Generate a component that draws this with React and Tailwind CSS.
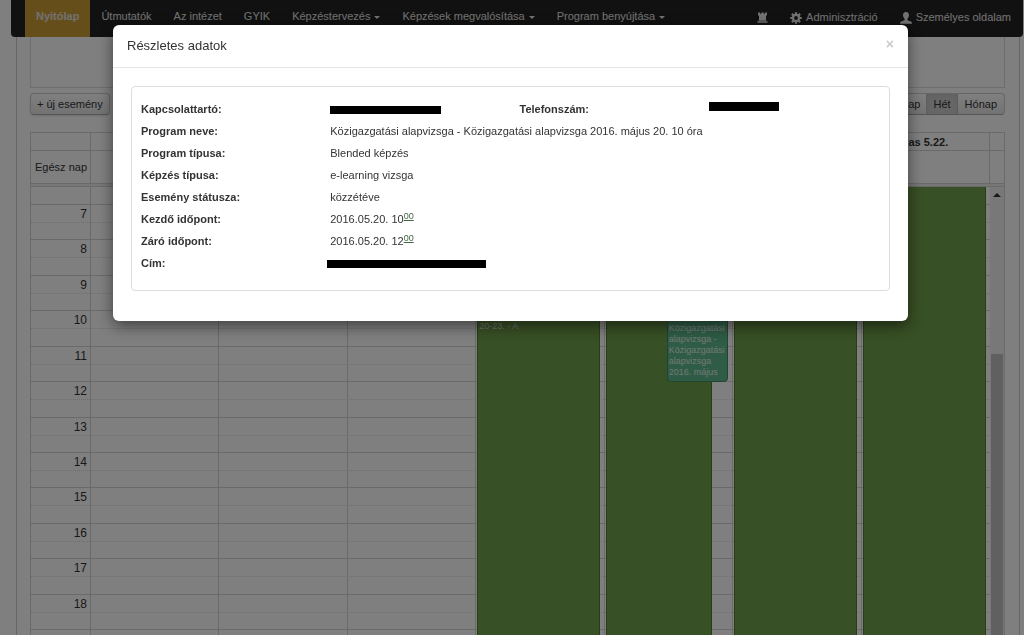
const navItems = [
  { label: "Nyitólap", active: true },
  { label: "Útmutatók" },
  { label: "Az intézet" },
  { label: "GYIK" },
  { label: "Képzéstervezés", menu: true },
  { label: "Képzések megvalósítása", menu: true },
  { label: "Program benyújtása", menu: true },
];

const days = ["", "", "", "", "", "", "vas 5.22."];
const hours = [7, 8, 9, 10, 11, 12, 13, 14, 15, 16, 17, 18];

const details = [
  { label: "Program neve:", value: "Közigazgatási alapvizsga - Közigazgatási alapvizsga 2016. május 20. 10 óra" },
  { label: "Program típusa:", value: "Blended képzés" },
  { label: "Képzés típusa:", value: "e-learning vizsga" },
  { label: "Esemény státusza:", value: "közzétéve" },
  { label: "Kezdő időpont:", value: "2016.05.20. 10", minutes: "00" },
  { label: "Záró időpont:", value: "2016.05.20. 12", minutes: "00" },
];

const TowerIcon = () => (
  <svg className="w-[11px] h-[11px]" viewBox="0 0 11 11" fill="currentColor">
    <path d="M1 0.500H3V1.700H4.300V0.500H6.700V1.700H8V0.500H10V3L9 4V7.600L9.600 8.700H1.400L2 7.600V4L1 3ZM0.500 9.300H10.500V10.700H0.500Z" />
  </svg>
);

const CogIcon = () => (
  <svg className="w-3 h-3" viewBox="0 0 12 12">
    <g stroke="currentColor" strokeWidth="2.200">
      <path d="M6 0.200V11.800M0.200 6H11.800M1.900 1.900L10.100 10.100M10.100 1.900L1.900 10.100" />
    </g>
    <circle cx="6" cy="6" r="4.200" fill="currentColor" />
    <circle cx="6" cy="6" r="1.900" fill="#222" />
  </svg>
);

const UserIcon = () => (
  <svg className="w-3 h-3" viewBox="0 0 12 12" fill="currentColor">
    <path d="M6 0C4 0 2.900 1.300 3 3.300C3.100 4.900 3.800 6.100 4.600 6.800V8C4.100 8.700 1 9.200 0.400 10.100C0.100 10.600 0.100 11.200 0.100 11.800H11.900C11.900 11.200 11.900 10.600 11.600 10.100C11 9.200 7.900 8.700 7.400 8V6.800C8.200 6.100 8.900 4.900 9 3.300C9.100 1.300 8 0 6 0Z" />
  </svg>
);

const Navbar = () => (
  <nav className="ml-[11px] mr-px h-[37px] pl-[14px] pr-3 flex justify-between bg-[#222] rounded-b text-[#e4e4e4]">
    <div className="flex">
      {navItems.map((item) => (
        <a
          key={item.label}
          href="#"
          className={
            item.active
              ? "flex items-center px-[11px] pb-1 font-bold bg-[#cc9c34]"
              : "flex items-center px-[11px] pb-1"
          }
        >
          {item.label}
          {item.menu && (
            <span className="ml-1 mt-[2px] border-x-3 border-t-3 border-x-transparent border-t-current" />
          )}
        </a>
      ))}
    </div>
    <div className="flex items-center gap-[22px] pb-[2px]">
      <a href="#" aria-label="Intézmény">
        <TowerIcon />
      </a>
      <a href="#" className="flex items-center gap-1">
        <CogIcon />
        Adminisztráció
      </a>
      <a href="#" className="flex items-center gap-1">
        <UserIcon />
        Személyes oldalam
      </a>
    </div>
  </nav>
);

const Toolbar = () => (
  <div className="flex justify-between mt-[5px] mb-[17px]">
    <button className="h-[22px] px-[6px] rounded border border-[#ccc] border-b-[#aaa] bg-linear-to-b from-white to-[#e6e6e6] shadow-sm">
      + új esemény
    </button>
    <div className="flex rounded border border-[#ccc] border-b-[#aaa] h-[22px] overflow-hidden bg-linear-to-b from-white to-[#e6e6e6]">
      <button className="px-[6px]">Nap</button>
      <button className="px-[6px] bg-[#ccc] border-x border-[#bbb] shadow-inner">Hét</button>
      <button className="px-[7px]">Hónap</button>
    </div>
  </div>
);

const Calendar = () => (
  <div className="border border-[#d4d4d4] text-xs">
    {/* Day names */}
    <div className="flex h-[18px] border-b border-[#d4d4d4] text-center font-bold">
      <div className="w-[60px] border-r border-[#d4d4d4]" />
      <div className="flex-1 grid grid-cols-7 text-[11px] leading-[18px]">
        {days.map((day, i) => (
          <div key={i} className="border-r border-[#d4d4d4]">
            {day}
          </div>
        ))}
      </div>
      <div className="w-[14px]" />
    </div>

    {/* All day */}
    <div className="flex h-8">
      <div className="w-[60px] pr-[3px] border-r border-[#d4d4d4] flex items-center justify-end whitespace-nowrap text-[11px]">
        Egész nap
      </div>
      <div className="flex-1 grid grid-cols-7">
        {days.map((day, i) => (
          <div key={i} className="border-r border-[#d4d4d4]" />
        ))}
      </div>
      <div className="w-[14px]" />
    </div>
    <div className="h-1 border-y border-[#d4d4d4] bg-[#eee]" />

    {/* Time grid */}
    <div className="flex">
      <div className="relative flex-1">
        <div className="h-[18px] border-b border-[#d4d4d4]" />
        <div className="grid grid-rows-12 h-[425px]">
          {hours.map((hour) => (
            <div key={hour} className="border-b border-[#d4d4d4] flex flex-col">
              <div className="flex-1 border-b border-dotted border-[#ddd]">
                <div className="w-[60px] pt-px pr-1 text-right">{hour}</div>
              </div>
              <div className="flex-1" />
            </div>
          ))}
        </div>
        <div className="h-9" />

        {/* Events over the grid */}
        <div className="absolute inset-0 flex">
          <div className="w-[60px] border-r border-[#d4d4d4]" />
          <div className="flex-1 grid grid-cols-7">
            <div className="border-r border-[#d4d4d4]" />
            <div className="border-r border-[#d4d4d4]" />
            <div className="border-r border-[#d4d4d4]" />
            <div className="pl-px pr-1 border-r border-[#d4d4d4]">
              <div className="h-full bg-[#70a04a] border-x border-[#507a30] pt-[134px] px-px text-[9px] leading-[11px] text-[#ddd]">
                20-23. - A
              </div>
            </div>
            <div className="relative pl-px border-r border-[#d4d4d4]">
              <div className="h-full w-[106px] bg-[#70a04a] border-x border-[#507a30]" />
              <div className="absolute left-[62px] right-1 top-[122px] h-[73px] pl-px pt-[13px] overflow-hidden rounded-b border border-[#408a60] bg-[#5cb88c] text-[9px] leading-[11px] text-[#e4f0e8]">
                Közigazgatási alapvizsga - Közigazgatási alapvizsga 2016. május
              </div>
            </div>
            <div className="pl-px pr-1 border-r border-[#d4d4d4]">
              <div className="h-full bg-[#70a04a] border-x border-[#507a30]" />
            </div>
            <div className="pl-px pr-1">
              <div className="h-full bg-[#70a04a] border-x border-[#507a30]" />
            </div>
          </div>
        </div>
      </div>
      <div className="w-[14px] bg-[#f1f1f1]">
        <div className="mt-[6px] mx-auto w-2 border-x-4 border-b-4 border-x-transparent border-b-[#333]" />
        <div className="mt-[157px] mx-px h-80 bg-[#c1c1c1]" />
      </div>
    </div>
  </div>
);

const DetailsModal = () => (
  <div className="fixed inset-0 pt-[25px] pr-[3px] bg-black/50 flex items-start justify-center">
    <div
      role="dialog"
      aria-labelledby="modal-title"
      className="w-[795px] max-w-full bg-white rounded-md shadow-[0_5px_15px_rgba(0,0,0,0.5)]"
    >
      <div className="flex items-start justify-between h-[43px] px-[14px] pt-[11px] border-b border-[#e5e5e5]">
        <h4 id="modal-title" className="text-[13px] leading-5">
          Részletes adatok
        </h4>
        <button aria-label="Bezárás" className="text-sm leading-4 font-bold text-[#ccc]">
          ×
        </button>
      </div>

      <div className="px-[18px] pt-[18px] pb-[30px]">
        <div className="pt-[11px] pb-4 border border-[#ddd] rounded">
          <div className="grid grid-cols-4 leading-[22px]">
            <div className="pl-[9px] font-bold">Kapcsolattartó:</div>
            <div className="pl-[9px] flex items-center">
              <span className="w-[111px] h-2 mt-[2px] bg-black" />
            </div>
            <div className="pl-[9px] font-bold">Telefonszám:</div>
            <div className="pl-[9px] flex items-center">
              <span className="w-[70px] h-[9px] mb-[6px] bg-black" />
            </div>
            {details.map((row) => (
              <div key={row.label} className="contents">
                <div className="pl-[9px] font-bold">{row.label}</div>
                <div className="pl-[9px] col-span-3">
                  {row.value}
                  {row.minutes && (
                    <sup className="text-[9px] leading-none underline text-[#464]">{row.minutes}</sup>
                  )}
                </div>
              </div>
            ))}
            <div className="pl-[9px] font-bold">Cím:</div>
            <div className="pl-[6px] col-span-3 flex items-center">
              <span className="w-[159px] h-2 mt-[2px] bg-black" />
            </div>
          </div>
        </div>
      </div>
    </div>
  </div>
);

export default function App() {
  return (
    <div className="h-screen overflow-hidden bg-white font-['Liberation_Sans',Arial,sans-serif] text-[11px] text-[#333]">
      <Navbar />
      <main className="ml-4 mr-1 pl-[13px] pr-[14px] border-x border-[#ccc]">
        <div className="h-[51px] border-x border-b border-[#ddd]" />
        <Toolbar />
        <Calendar />
      </main>
      <DetailsModal />
    </div>
  );
}
